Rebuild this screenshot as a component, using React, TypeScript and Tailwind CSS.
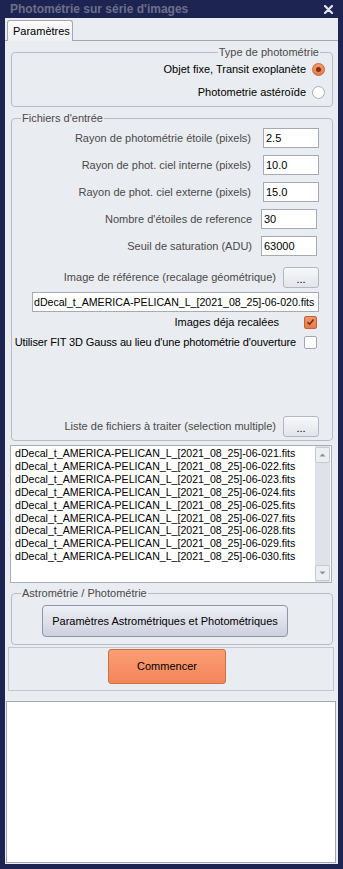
import type { ReactNode } from 'react';

const files = ['021', '022', '023', '024', '025', '027', '028', '029', '030'];

function Group({ title, right, className, children }: { title: string; right?: boolean; className: string; children?: ReactNode }) {
  return (
    <div className={`relative rounded-[4px] border border-[#b7bbc6] ${className}`}>
      <span
        className={`absolute top-[-7px] bg-[#e9ecf1] px-[1px] text-[11px] leading-[13px] text-[#4a4a4a] ${right ? 'right-[12px]' : 'left-[9px]'}`}
      >
        {title}
      </span>
      {children}
    </div>
  );
}

function Radio({ checked }: { checked?: boolean }) {
  if (checked) {
    return (
      <span className="flex h-[13px] w-[13px] items-center justify-center rounded-full border border-[#c9643a] bg-gradient-to-b from-[#f59b6c] to-[#e97a48]">
        <span className="h-[5px] w-[5px] rounded-full bg-[#7c3318]" />
      </span>
    );
  }
  return <span className="h-[13px] w-[13px] rounded-full border border-[#a9adb9] bg-white" />;
}

function Checkbox({ checked }: { checked?: boolean }) {
  if (checked) {
    return (
      <span className="flex h-[13px] w-[13px] shrink-0 items-center justify-center rounded-[2px] border border-[#c4603a] bg-gradient-to-b from-[#f39566] to-[#e57a48]">
        <svg width="9" height="8" viewBox="0 0 9 8">
          <path d="M1.5 4.2L3.6 6.2L7.6 1.5" fill="none" stroke="#6e2a12" strokeWidth="1.5" />
        </svg>
      </span>
    );
  }
  return <span className="h-[13px] w-[13px] shrink-0 rounded-[2px] border border-[#a4a8b5] bg-white" />;
}

function Field({ label, value, wide }: { label: string; value: string; wide?: boolean }) {
  return (
    <div className={`flex h-[20px] items-center justify-end ${wide ? 'gap-[12px] pr-[13px]' : 'gap-[9px] pr-[15px]'}`}>
      <span className="text-[#4a4a4a]">{label}</span>
      <div className="flex h-[20px] w-[56px] items-center border border-[#a6aab5] bg-white pl-[2px] text-black">{value}</div>
    </div>
  );
}

function DotsButton() {
  return (
    <div className="flex h-[21px] w-[36px] items-center justify-center rounded-[3px] border border-[#b3b7c2] bg-gradient-to-b from-[#f8f9fb] to-[#e1e4ea] pt-[3px] text-black">
      ...
    </div>
  );
}

export default function App() {
  return (
    <div className="flex h-[869px] w-[343px] flex-col bg-[#1e2451] font-['Liberation_Sans',Arial,sans-serif] text-[11px] leading-[13px] text-black">
      {/* title bar */}
      <div className="flex h-[18px] items-center justify-between pl-[10px] pr-[10px]">
        <span className="text-[12px] font-bold leading-none text-[#6b6f8c]">Photométrie sur série d'images</span>
        <svg width="9" height="9" viewBox="0 0 9 9">
          <path d="M1 1L8 8M8 1L1 8" stroke="#e3e5ee" strokeWidth="2.2" strokeLinecap="round" />
        </svg>
      </div>

      <div className="mx-[5px] flex h-[846px] flex-col bg-[#e9ecf1]">
        {/* tab strip */}
        <div className="flex h-[22px] items-end pl-[2px]">
          <div className="relative -mb-px flex h-[21px] w-[66px] items-center rounded-t-[3px] border border-b-0 border-[#a2a6b3] bg-gradient-to-b from-[#fbfbfc] to-[#eef0f4] pl-[5px]">
            Paramètres
          </div>
        </div>

        {/* tab panel */}
        <div className="flex h-[653px] flex-col border-t border-[#a2a6b3] pl-[6px] pr-[5px]">
          <Group title="Type de photométrie" right className="mt-[11px] h-[55px] pt-[5px]">
            <div className="flex h-[23px] items-center justify-end gap-[6px] pr-[7px]">
              <span>Objet fixe, Transit exoplanète</span>
              <Radio checked />
            </div>
            <div className="flex h-[23px] items-center justify-end gap-[6px] pr-[7px]">
              <span>Photometrie astéroïde</span>
              <Radio />
            </div>
          </Group>

          <Group title="Fichiers d'entrée" className="mt-[11px] flex h-[323px] flex-col pt-[9px]">
            <div className="flex flex-col gap-[7px]">
              <Field label="Rayon de photométrie étoile (pixels)" value="2.5" wide />
              <Field label="Rayon de phot. ciel interne (pixels)" value="10.0" wide />
              <Field label="Rayon de phot. ciel externe (pixels)" value="15.0" wide />
              <Field label="Nombre d'étoiles de reference" value="30" />
              <Field label="Seuil de saturation (ADU)" value="63000" />
            </div>
            <div className="mt-[11px] flex items-center justify-end gap-[7px] pr-[13px]">
              <span className="text-[#4a4a4a]">Image de référence (recalage géométrique)</span>
              <DotsButton />
            </div>
            <div className="mt-[4px] ml-[20px] mr-[13px] flex h-[20px] items-center overflow-hidden whitespace-nowrap border border-[#a6aab5] bg-white pl-[1px] text-[10.6px]">
              dDecal_t_AMERICA-PELICAN_L_[2021_08_25]-06-020.fits
            </div>
            <div className="mt-[3px] flex h-[14px] items-center justify-end gap-[25px] pr-[15px]">
              <span>Images déja recalées</span>
              <Checkbox checked />
            </div>
            <div className="mt-[6px] flex h-[14px] items-center justify-end gap-[8px] pr-[15px]">
              <span className="whitespace-nowrap tracking-[-0.13px]">Utiliser FIT 3D Gauss au lieu d'une photométrie d'ouverture</span>
              <Checkbox />
            </div>
            <div className="mt-auto mb-[3px] flex items-center justify-end gap-[7px] pr-[13px]">
              <span className="text-[#4a4a4a]">Liste de fichiers à traiter (selection multiple)</span>
              <DotsButton />
            </div>
          </Group>

          {/* file list */}
          <div className="mt-[4px] -ml-px mr-px flex h-[138px] border border-[#a9adb8] bg-white">
            <div className="flex-1 pt-[1px] pl-[4px] text-[10.6px] leading-[12.9px]">
              {files.map((n) => (
                <div key={n}>dDecal_t_AMERICA-PELICAN_L_[2021_08_25]-06-{n}.fits</div>
              ))}
            </div>
            <div className="mr-px flex w-[15px] flex-col bg-[#dfe2e8] py-px">
              <div className="flex h-[16px] items-center justify-center rounded-[2px] border border-[#c6c9d2] bg-[#eceef2]">
                <svg width="7" height="4" viewBox="0 0 7 4">
                  <path d="M0.5 3.5L3.5 0.5L6.5 3.5Z" fill="#8b8f9c" />
                </svg>
              </div>
              <div className="flex-1" />
              <div className="flex h-[16px] items-center justify-center rounded-[2px] border border-[#c6c9d2] bg-[#eceef2]">
                <svg width="7" height="4" viewBox="0 0 7 4">
                  <path d="M0.5 0.5L3.5 3.5L6.5 0.5Z" fill="#8b8f9c" />
                </svg>
              </div>
            </div>
          </div>

          <Group title="Astrométrie / Photométrie" className="mt-[10px] h-[52px] pt-[11px] pl-[30px]">
            <div className="flex h-[32px] w-[246px] items-center justify-center rounded-[4px] border border-[#9094a9] bg-gradient-to-b from-[#eff0f6] to-[#cdd0de]">
              Paramètres Astrométriques et Photométriques
            </div>
          </Group>

          <div className="mt-[2px] -ml-[3px] -mr-px h-[44px] border border-[#c3c6cf] pt-px pl-[99px]">
            <div className="flex h-[35px] w-[118px] items-center justify-center rounded-[3px] border border-[#cc7048] bg-gradient-to-b from-[#fa9e74] to-[#f5855a]">
              Commencer
            </div>
          </div>
        </div>

        {/* memo */}
        <div className="mt-[8px] ml-px h-[162px] w-[330px] border border-[#a3a7b5] bg-white" />
      </div>
    </div>
  );
}
